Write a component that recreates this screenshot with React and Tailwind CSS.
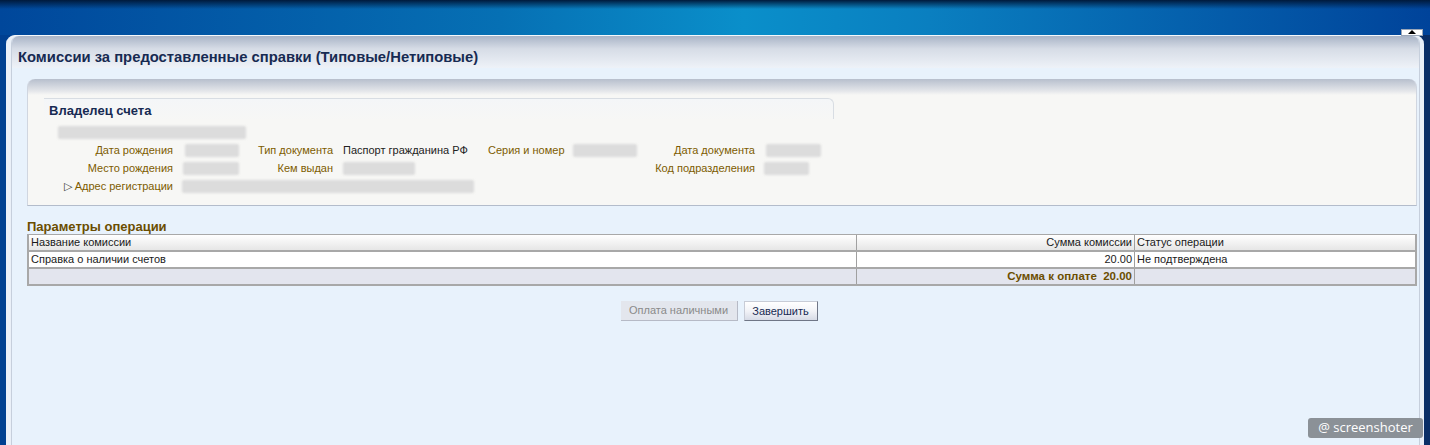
import React from "react";

function Blur({ className = "" }) {
  return <div className={`h-[13px] rounded-[2px] bg-[#dcdcdc] blur-[1px] ${className}`} />;
}

function Label({ className = "", children }) {
  return <div className={`shrink-0 whitespace-nowrap text-right text-[#7d5c00] ${className}`}>{children}</div>;
}

export default function App() {
  return (
    <div className="relative flex h-[445px] w-[1430px] flex-col overflow-hidden bg-[linear-gradient(to_right,#004091,#004091_50%,#0a2e66)] font-['Tahoma','Liberation_Sans',sans-serif] text-[11px]">
      {/* top band */}
      <div className="h-[35px] shrink-0 bg-[linear-gradient(to_bottom,#001a3c,rgba(0,30,70,0)_9px),linear-gradient(to_right,#00479b,#0670b4_35%,#0a8fca_52%,#0a7fc0_65%,#00439a)]" />
      <button className="absolute right-[7px] top-[29px] flex h-[7px] w-[22px] items-start justify-center border border-[#9aa6b8] bg-white">
        <span className="h-0 w-0 border-x-[4px] border-b-[4px] border-x-transparent border-b-black" />
      </button>

      {/* main panel */}
      <div className="mx-[6px] flex flex-1 flex-col rounded-t-[9px] border-t border-[#f4f8fc] bg-[#eaf0f8] pl-[5px] pr-[4px]">
        <div className="flex flex-1 flex-col rounded-t-[7px] border-x border-[#c6cfdc] bg-[#e8f2fc]">
          <div className="h-[32px] shrink-0 rounded-t-[7px] bg-[linear-gradient(to_bottom,#a9b4c7,#d6dce6_40%,#eef2f8)] pl-[6px] pt-[12px] text-[14.8px] font-bold leading-[18px] text-[#172a52]">
            Комиссии за предоставленные справки (Типовые/Нетиповые)
          </div>

          <div className="flex flex-col pl-[15px] pr-[2px] pt-[11px]">
            {/* owner panel */}
            <div className="rounded-t-[8px] border-x border-b border-[#b3bccb] border-x-[#d0d6e0] bg-[linear-gradient(to_bottom,#b7bfcd,#e4e6ea_12px,#f7f7f5_16px,#f7f7f5)] pb-[10px] pl-[16px] pt-[19px]">
              <div className="w-[790px] rounded-tr-[6px] border-r border-t border-[#d8dde3] bg-[linear-gradient(to_bottom,#f4f6f8,#f7f7f5_22px)]">
                <div className="pl-[5px] pt-[4px] text-[13px] font-bold leading-[16px] text-[#172a52]">Владелец счета</div>
              </div>
              <Blur className="ml-[14px] mt-[7px] w-[188px]" />

              <div className="mt-[2px] flex h-[18px] items-center">
                <Label className="w-[129px]">Дата рождения</Label>
                <div className="ml-[10px] w-[72px] shrink-0"><Blur className="ml-[2px] w-[54px]" /></div>
                <Label className="w-[78px]">Тип документа</Label>
                <div className="ml-[10px] w-[145px] shrink-0 text-[#222]">Паспорт гражданина РФ</div>
                <Label className="w-[75px]">Серия и номер</Label>
                <div className="ml-[10px] w-[82px] shrink-0"><Blur className="w-[64px]" /></div>
                <Label className="w-[100px]">Дата документа</Label>
                <div className="ml-[9px]"><Blur className="ml-[2px] w-[55px]" /></div>
              </div>

              <div className="flex h-[18px] items-center">
                <Label className="w-[129px]">Место рождения</Label>
                <div className="ml-[10px] w-[72px] shrink-0"><Blur className="w-[56px]" /></div>
                <Label className="w-[78px]">Кем выдан</Label>
                <div className="ml-[10px] w-[145px] shrink-0"><Blur className="w-[72px]" /></div>
                <div className="w-[167px] shrink-0" />
                <Label className="w-[100px]">Код подразделения</Label>
                <div className="ml-[9px]"><Blur className="w-[45px]" /></div>
              </div>

              <div className="flex h-[18px] items-center">
                <Label className="w-[129px]">
                  <span className="mr-[3px] text-[#333]">▷</span>Адрес регистрации
                </Label>
                <div className="ml-[9px]"><Blur className="w-[292px]" /></div>
              </div>
            </div>

            <div className="mt-[14px] text-[13px] font-bold leading-[14px] text-[#6b4d00]">Параметры операции</div>

            {/* table */}
            <div className="border-2 border-t border-[#a8a8a8] text-[#1a1a1a]">
              <div className="grid h-[17px] grid-cols-[827px_278px_1fr] border-b-2 border-[#a8a8a8] bg-[linear-gradient(to_bottom,#ffffff,#e6e6e6)] leading-[15px]">
                <div className="px-[2px]">Название комиссии</div>
                <div className="border-l border-[#a0a0a0] px-[2px] text-right">Сумма комиссии</div>
                <div className="border-l border-[#a0a0a0] px-[2px]">Статус операции</div>
              </div>
              <div className="grid h-[17px] grid-cols-[827px_278px_1fr] border-b-2 border-[#a8a8a8] bg-white leading-[15px]">
                <div className="px-[2px]">Справка о наличии счетов</div>
                <div className="border-l border-[#a0a0a0] px-[2px] text-right">20.00</div>
                <div className="border-l border-[#a0a0a0] px-[2px]">Не подтверждена</div>
              </div>
              <div className="grid h-[15px] grid-cols-[827px_278px_1fr] bg-[#e3e5ee] leading-[15px]">
                <div />
                <div className="border-l border-[#a0a0a0] px-[2px] text-right text-[11.5px] font-bold text-[#6b4d00]">
                  Сумма к оплате&nbsp;&nbsp;20.00
                </div>
                <div className="border-l border-[#a0a0a0]" />
              </div>
            </div>

            {/* buttons */}
            <div className="mr-[6px] mt-[15px] flex justify-center gap-[6px]">
              <button
                disabled
                className="h-[20px] w-[117px] border-b border-r border-[#b6bac6] bg-[#e3e6ed] text-[11px] text-[#8a8a8a]"
              >
                Оплата наличными
              </button>
              <button className="h-[20px] w-[74px] border border-[#c8ccd6] border-b-[#6f7686] border-r-[#6f7686] bg-[linear-gradient(to_bottom,#ffffff,#f2f3f7_50%,#d7dbe6)] text-[11px] text-[#172a52]">
                Завершить
              </button>
            </div>
          </div>
        </div>
      </div>

      <div className="absolute bottom-[7px] right-[7px] flex h-[20px] w-[115px] items-center justify-center rounded-[3px] bg-[#8b9197] font-['Open_Sans',sans-serif] text-[13px] text-white">
        @ screenshoter
      </div>
    </div>
  );
}
